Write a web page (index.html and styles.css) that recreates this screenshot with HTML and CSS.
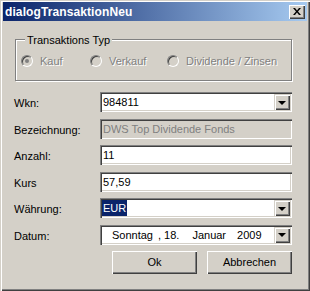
FILE: index.html
```html
<!DOCTYPE html>
<html lang="de">
<head>
    <meta charset="UTF-8">
    <title>dialogTransaktionNeu</title>
    <link rel="stylesheet" href="styles.css">
</head>
<body>
    <div class="window">
        <div class="titlebar">
            <span class="title">dialogTransaktionNeu</span>
            <button class="close-btn" title="Schließen">
                <svg width="8" height="7" viewBox="0 0 8 7">
                    <path d="M0 0h2l2 2.5L6 0h2L5 3.5 8 7H6L4 4.5 2 7H0l3-3.5z" fill="#000"/>
                </svg>
            </button>
        </div>

        <div class="client">
            <div class="group">
                <span class="group-title">Transaktions Typ</span>
                <label class="radio-opt"><span class="radio checked"></span>Kauf</label>
                <label class="radio-opt"><span class="radio"></span>Verkauf</label>
                <label class="radio-opt"><span class="radio"></span>Dividende / Zinsen</label>
            </div>

            <div class="form">
                <label class="lbl">Wkn:</label>
                <div class="field combo">
                    <span class="value">984811</span>
                    <span class="drop"><span class="arrow"></span></span>
                </div>

                <label class="lbl">Bezeichnung:</label>
                <div class="field disabled">
                    <span class="value">DWS Top Dividende Fonds</span>
                </div>

                <label class="lbl">Anzahl:</label>
                <div class="field">
                    <span class="value">11</span>
                </div>

                <label class="lbl">Kurs</label>
                <div class="field">
                    <span class="value">57,59</span>
                </div>

                <label class="lbl">Währung:</label>
                <div class="field combo">
                    <span class="value"><span class="selected">EUR</span></span>
                    <span class="drop"><span class="arrow"></span></span>
                </div>

                <label class="lbl">Datum:</label>
                <div class="field combo">
                    <span class="value date">
                        <span class="d-day">Sonntag</span>
                        <span class="d-num">, 18.</span>
                        <span class="d-month">Januar</span>
                        <span class="d-year">2009</span>
                    </span>
                    <span class="drop"><span class="arrow"></span></span>
                </div>
            </div>

            <div class="actions">
                <button class="btn">Ok</button>
                <button class="btn">Abbrechen</button>
            </div>
        </div>
    </div>
</body>
</html>
```

FILE: styles.css
```css
:root {
    --face: #d4d0c8;
    --light: #ffffff;
    --shadow: #808080;
    --dark: #404040;
    --text: #000000;
    --grey-text: #808080;
}

* {
    box-sizing: border-box;
}

body {
    margin: 0;
    font-family: 'Liberation Sans', Arial, sans-serif;
    font-size: 11px;
    color: var(--text);
    background: var(--face);
}

.window {
    width: 310px;
    height: 291px;
    padding: 2px 3px 3px 3px;
    background: var(--face);
    box-shadow:
        inset 1px 1px 0 var(--face),
        inset 2px 2px 0 var(--light),
        inset -1px -1px 0 var(--dark),
        inset -2px -2px 0 var(--shadow);
}

.titlebar {
    height: 19px;
    display: flex;
    align-items: center;
    justify-content: space-between;
    padding: 0 2px 0 2px;
    background: linear-gradient(90deg, #0a246a 0%, #a6caf0 100%);
}

.title {
    color: #ffffff;
    font-weight: bold;
    font-size: 12px;
    letter-spacing: 0.1px;
}

.close-btn {
    width: 16px;
    height: 14px;
    padding: 0;
    border: none;
    display: flex;
    align-items: center;
    justify-content: center;
    background: var(--face);
    box-shadow:
        inset 1px 1px 0 var(--light),
        inset -1px -1px 0 var(--dark),
        inset -2px -2px 0 var(--shadow);
}

.close-btn svg {
    display: block;
    margin: 0 1px 1px 0;
}

.client {
    padding: 0 15px 0 11px;
}

/* group box */
.group {
    position: relative;
    height: 42px;
    margin: 18px 0 0 1px;
    padding: 2px 5px 0 5px;
    display: grid;
    grid-template-columns: 69px 77px auto;
    align-items: center;
    border: 1px solid var(--shadow);
    box-shadow: inset 1px 1px 0 var(--light), 1px 1px 0 var(--light);
}

.group-title {
    position: absolute;
    top: -6px;
    left: 9px;
    padding: 0 2px;
    line-height: 13px;
    background: var(--face);
}

.radio-opt {
    display: flex;
    align-items: center;
    gap: 7px;
    color: var(--grey-text);
    text-shadow: 1px 1px 0 var(--light);
}

.radio {
    position: relative;
    width: 12px;
    height: 12px;
    border-radius: 50%;
    border: 1px solid;
    border-color: var(--shadow) var(--light) var(--light) var(--shadow);
    background: var(--face);
    box-shadow: inset 1px 1px 0 var(--dark);
}

.radio.checked::after {
    content: "";
    position: absolute;
    left: 3px;
    top: 3px;
    width: 4px;
    height: 4px;
    border-radius: 50%;
    background: var(--shadow);
}

/* form rows */
.form {
    display: grid;
    grid-template-columns: 86px 1fr;
    grid-auto-rows: 20px;
    row-gap: 6.5px;
    margin-top: 11px;
}

.lbl {
    display: flex;
    align-items: center;
    padding-top: 2px;
}

.field {
    position: relative;
    display: flex;
    align-items: center;
    background: #ffffff;
    padding: 0 2px 0 3px;
    box-shadow:
        inset 1px 1px 0 var(--shadow),
        inset 2px 2px 0 var(--dark),
        inset -1px -1px 0 var(--light),
        inset -2px -2px 0 var(--face);
}

.field.disabled {
    background: var(--face);
    color: var(--grey-text);
}

.value {
    flex: 1;
    white-space: nowrap;
}

.selected {
    display: inline-block;
    background: #0a246a;
    color: #ffffff;
    padding: 0 1px;
    margin-left: -1px;
    line-height: 16px;
}

.date {
    display: flex;
    padding-left: 9px;
}

.d-num {
    margin-left: 5px;
}

.d-month {
    margin-left: 13px;
}

.d-year {
    margin-left: 11px;
}

.drop {
    width: 16px;
    height: 16px;
    display: flex;
    align-items: center;
    justify-content: center;
    background: var(--face);
    box-shadow:
        inset 1px 1px 0 var(--face),
        inset 2px 2px 0 var(--light),
        inset -1px -1px 0 var(--dark),
        inset -2px -2px 0 var(--shadow);
}

.arrow {
    width: 0;
    height: 0;
    border-left: 4px solid transparent;
    border-right: 4px solid transparent;
    border-top: 4px solid #000000;
    margin-top: 1px;
}

/* dialog buttons */
.actions {
    display: flex;
    justify-content: flex-end;
    gap: 10px;
    margin-top: 6px;
}

.btn {
    width: 85px;
    height: 23px;
    padding: 0;
    border: none;
    font-family: 'Liberation Sans', Arial, sans-serif;
    font-size: 11px;
    color: var(--text);
    background: var(--face);
    box-shadow:
        inset 1px 1px 0 var(--light),
        inset -1px -1px 0 var(--dark),
        inset -2px -2px 0 var(--shadow);
}
```
